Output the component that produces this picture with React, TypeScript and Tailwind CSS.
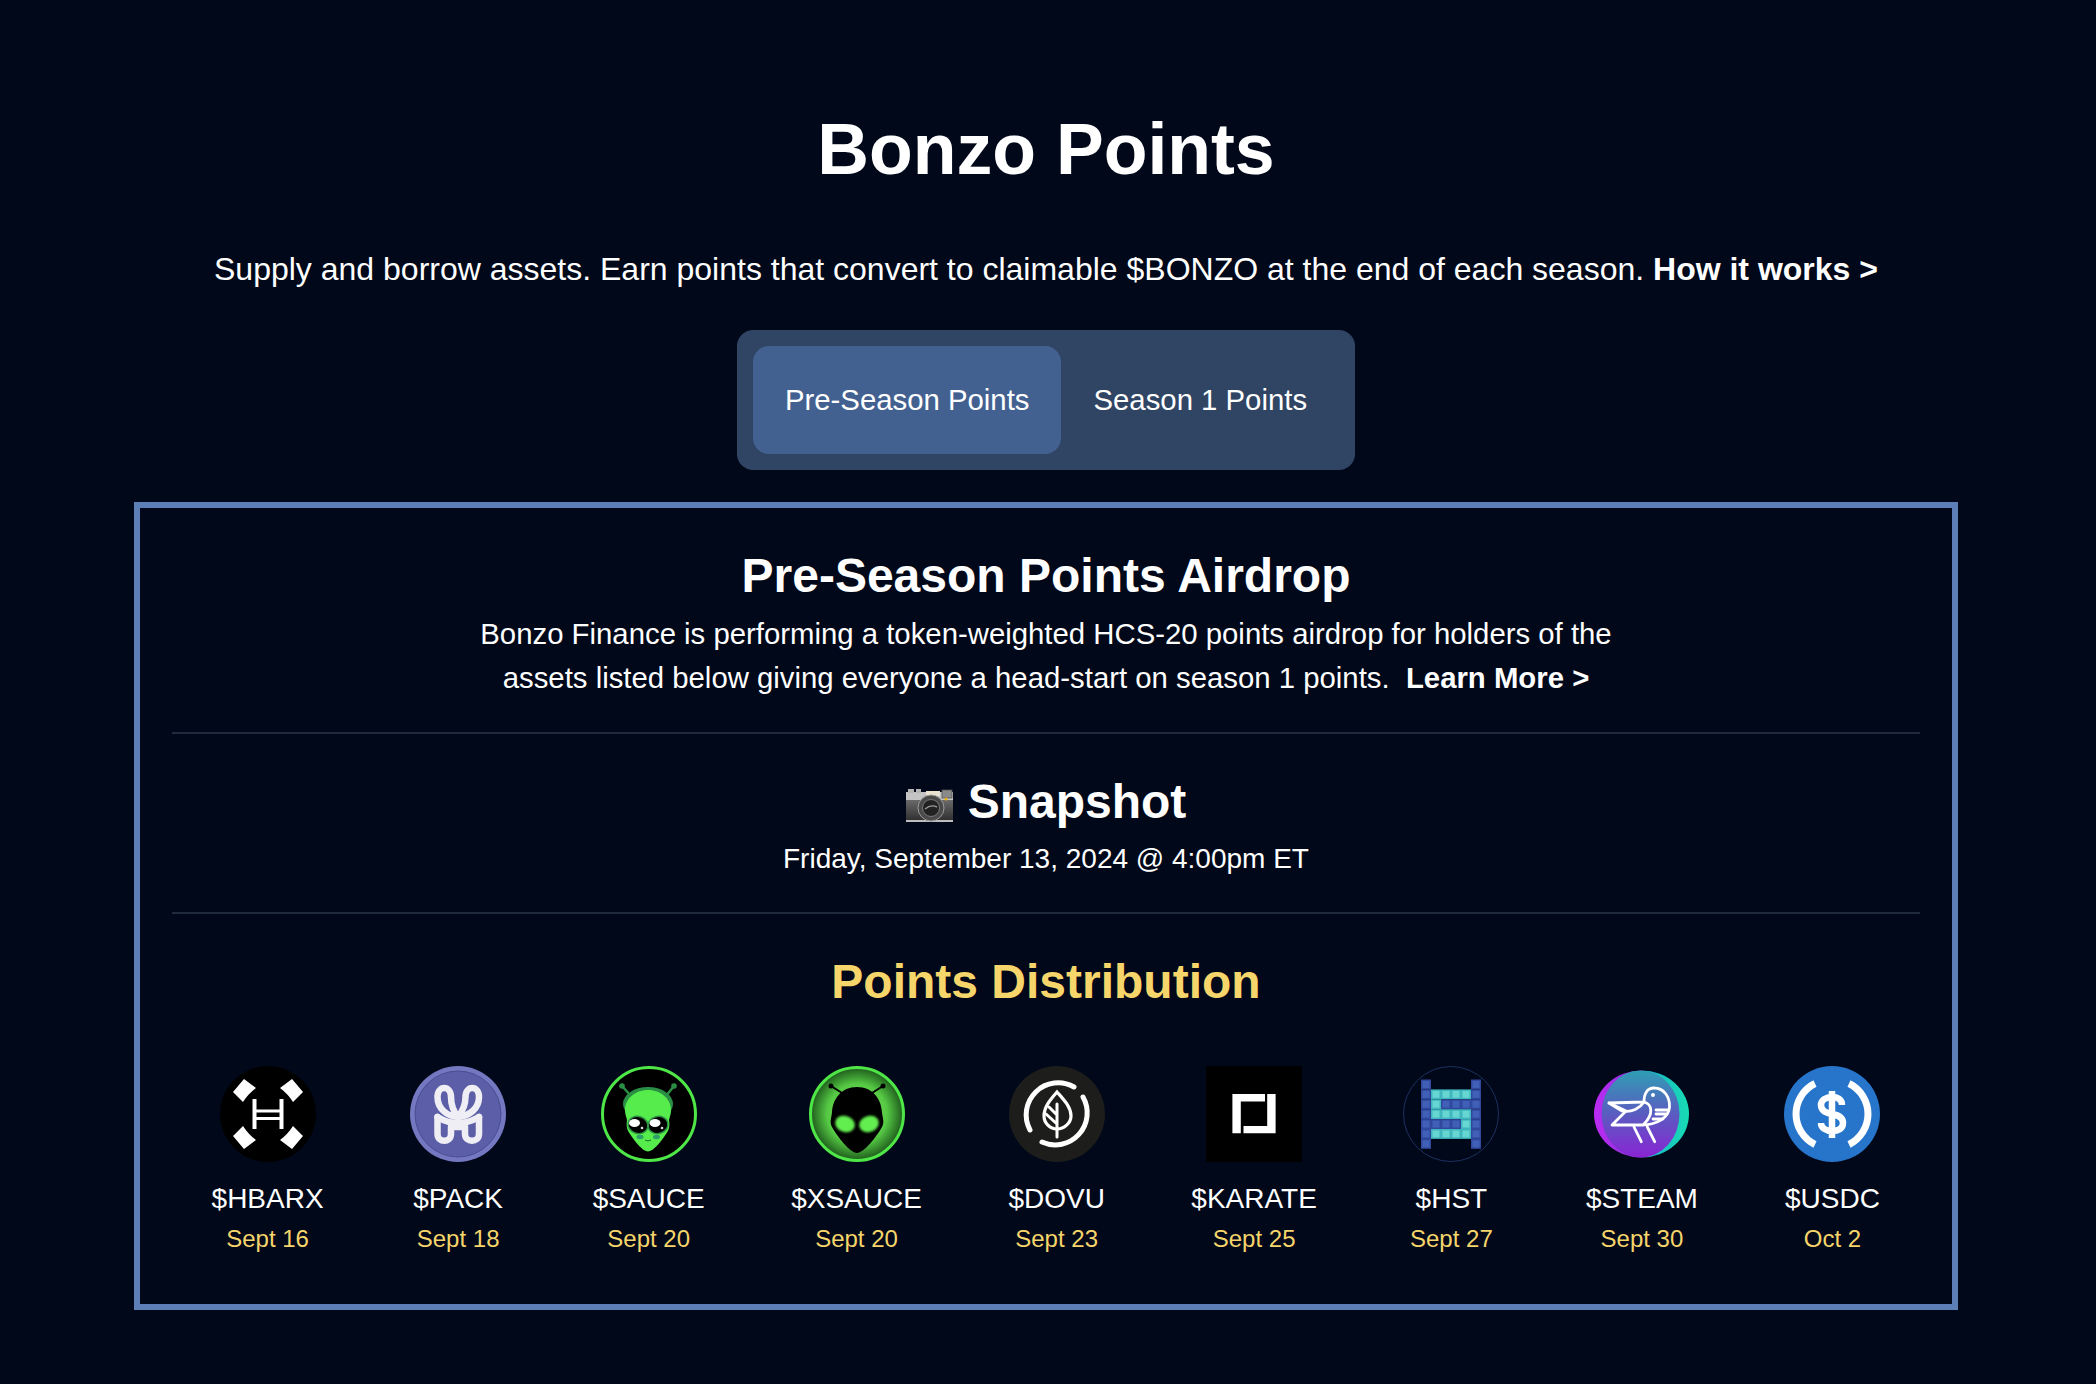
import type { ReactNode } from 'react';

function HbarxIcon() {
  return (
    <svg viewBox="0 0 96 96" className="h-24 w-24">
      <circle cx="48" cy="48" r="48" fill="#000" />
      <path d="M13 26 24 13 36 22Q28 28 23 36Z" fill="#fff" />
      <path d="M83 26 72 13 60 22Q68 28 73 36Z" fill="#fff" />
      <path d="M13 70 24 83 36 74Q28 68 23 60Z" fill="#fff" />
      <path d="M83 70 72 83 60 74Q68 68 73 60Z" fill="#fff" />
      <path d="M34.5 33v30M61.5 33v30" stroke="#fff" strokeWidth="4" fill="none" />
      <path d="M34.5 45h27M34.5 52.5h27" stroke="#fff" strokeWidth="3" fill="none" />
    </svg>
  );
}

function PackIcon() {
  return (
    <svg viewBox="0 0 96 96" className="h-24 w-24">
      <circle cx="48" cy="48" r="48" fill="#7478c0" />
      <circle cx="48" cy="48" r="43" fill="#5c5fa8" stroke="#4a4d90" strokeWidth="1" />
      <g stroke="#eeeef4" strokeWidth="6.5" fill="none" strokeLinecap="round" strokeLinejoin="round">
        <path d="M48 51C36 50 27.5 42 27.5 31 27.5 19 41 19 41 31 41 39 44 46 48 51 52 46 55.5 39 55.5 31 55.5 19 69 19 69 31 69 42 60 50 48 51" />
        <path d="M27.5 51V68C27.5 77 41 77 41 68V61H55V68C55 77 69 77 69 68V51" />
        <path d="M27.5 51C34 55 41 57 48 57 55 57 62 55 69 51" />
      </g>
    </svg>
  );
}

function SauceIcon() {
  return (
    <svg viewBox="0 0 96 96" className="h-24 w-24">
      <circle cx="48" cy="48" r="46.5" fill="#000" stroke="#4fe648" strokeWidth="3" />
      <path d="M30 30 21 20M65 30 73 20" stroke="#2a8f45" strokeWidth="2.5" />
      <circle cx="21" cy="20" r="2.8" fill="#2a8f45" />
      <circle cx="73" cy="20" r="2.8" fill="#2a8f45" />
      <ellipse cx="47" cy="38" rx="25" ry="17" fill="#2a8f45" />
      <path d="M47 24C60 24 70 33 70 44 70 48 69 50 68 54 69 60 68 64 65 68 60 76 52 85.500 47 85.500 42 85.500 34 76 29 68 26 64 25 60 26 54 25 50 24 48 24 44 24 33 34 24 47 24Z" fill="#55ec4c" />
      <ellipse cx="37" cy="59" rx="10" ry="8.500" fill="#000" stroke="#2d8f43" strokeWidth="1.5" transform="rotate(15 37 59)" />
      <ellipse cx="57" cy="59" rx="10" ry="8.500" fill="#000" stroke="#2d8f43" strokeWidth="1.5" transform="rotate(-15 57 59)" />
      <ellipse cx="33.500" cy="57" rx="5.500" ry="4" fill="#fff" />
      <ellipse cx="54" cy="57" rx="5.500" ry="4" fill="#fff" />
      <circle cx="41" cy="62" r="1.3" fill="#ddd" />
      <circle cx="61" cy="62" r="1.3" fill="#ddd" />
      <ellipse cx="39" cy="71" rx="3.500" ry="2.200" fill="#2f9e6b" />
      <ellipse cx="55.500" cy="71" rx="3.500" ry="2.200" fill="#2f9e6b" />
      <path d="M44 74Q47 76 50 74" stroke="#1c6b30" strokeWidth="1" fill="none" />
    </svg>
  );
}

function XsauceIcon() {
  return (
    <svg viewBox="0 0 96 96" className="h-24 w-24">
      <defs>
        <radialGradient id="xs-bg">
          <stop offset="0" stopColor="#8af060" />
          <stop offset="0.65" stopColor="#55c844" />
          <stop offset="1" stopColor="#1d5a1b" />
        </radialGradient>
        <filter id="xs-glow">
          <feGaussianBlur stdDeviation="1" />
        </filter>
      </defs>
      <circle cx="48" cy="48" r="46.5" fill="url(#xs-bg)" stroke="#4fe648" strokeWidth="3" />
      <path d="M33 27 22 20M63 27 74 20" stroke="#000" strokeWidth="2" />
      <circle cx="22" cy="20" r="2.5" fill="#000" />
      <circle cx="74" cy="20" r="2.5" fill="#000" />
      <path d="M48 21C64 21 72 33 73 46 73 50 76 56 73 61 68 70 55 87 48 87 41 87 28 70 23 61 20 56 23 50 23 46 24 33 32 21 48 21Z" fill="#000" />
      <ellipse cx="36" cy="58" rx="10" ry="8" fill="#63ee4f" filter="url(#xs-glow)" transform="rotate(20 36 58)" />
      <ellipse cx="60" cy="58" rx="10" ry="8" fill="#63ee4f" filter="url(#xs-glow)" transform="rotate(-20 60 58)" />
    </svg>
  );
}

function DovuIcon() {
  return (
    <svg viewBox="0 0 96 96" className="h-24 w-24">
      <circle cx="48" cy="48" r="48" fill="#1d1d1b" />
      <g stroke="#fff" fill="none" strokeLinecap="round">
        <path d="M21 64A32 32 0 0 1 65 21" strokeWidth="5" />
        <path d="M74 31A32 32 0 0 1 33 76" strokeWidth="5" />
        <path d="M48 26C41 34 35 41 35 50 35 57 41 63 48 63 55 63 62 57 62 50 62 41 55 34 48 26Z" strokeWidth="3.2" />
        <path d="M48 38V71M48 49 40 41M48 58 37 48" strokeWidth="3" />
      </g>
    </svg>
  );
}

function KarateIcon() {
  return (
    <svg viewBox="0 0 96 96" className="h-24 w-24">
      <rect width="96" height="96" fill="#000" />
      <path d="M26.4 28H59V35.6H34.8V67.3H26.4Z" fill="#fff" />
      <path d="M61.2 28H69.6V67.3H37.5V60H61.2Z" fill="#fff" />
    </svg>
  );
}

const hstRows = ['BBBBBB', 'BTTTTB', 'BTBBBB', 'BTTTTB', 'BBBBTB', 'BTTTTB', 'BBBBBB'];

function HstIcon() {
  return (
    <svg viewBox="0 0 96 96" className="h-24 w-24">
      <circle cx="48" cy="48" r="47.5" fill="none" stroke="#1d3160" strokeWidth="1" />
      {hstRows.map((row, y) =>
        row.split('').map((c, x) => {
          // top and bottom rows only have the two pillars
          if ((y === 0 || y === 6) && x > 0 && x < 5) return null;
          const left = 18 + x * 10;
          const top = 13.5 + y * 9.9;
          return (
            <g key={`${x}-${y}`}>
              <rect x={left} y={top} width="10" height="9.9" fill={c === 'T' ? '#3fb5bd' : '#30499f'} />
              <rect x={left + 1.5} y={top + 1.5} width="7" height="6.9" fill={c === 'T' ? '#67d5d2' : '#4060b8'} />
            </g>
          );
        }),
      )}
    </svg>
  );
}

function SteamIcon() {
  return (
    <svg viewBox="0 0 96 96" className="h-24 w-24">
      <defs>
        <linearGradient id="st-out" x1="0" y1="0" x2="1" y2="0">
          <stop offset="0" stopColor="#bb2cf2" />
          <stop offset="0.5" stopColor="#8a30e0" />
          <stop offset="0.55" stopColor="#1cb4c8" />
          <stop offset="1" stopColor="#17dcb4" />
        </linearGradient>
        <linearGradient id="st-in" x1="0" y1="0" x2="0" y2="1">
          <stop offset="0" stopColor="#2f9eb4" />
          <stop offset="0.5" stopColor="#5a5cc0" />
          <stop offset="1" stopColor="#8a24d4" />
        </linearGradient>
      </defs>
      <ellipse cx="47.500" cy="48" rx="47.500" ry="43.500" fill="url(#st-out)" />
      <ellipse cx="46.500" cy="48" rx="39" ry="43.500" fill="url(#st-in)" />
      <g stroke="#fff" strokeWidth="2.800" fill="none" strokeLinecap="round" strokeLinejoin="round">
        <path d="M15 37 50 36C50 28 53 22 60 22 70 22 76 31 75.500 41 75 52 62 59 48 59H18L32 45Z" />
        <path d="M15 37 28 45C38 47 46 42 50 36" />
        <path d="M50 36C58 38 60 48 50 58" />
        <path d="M62 44H74M62 48H72M59 53H69" />
        <path d="M40 61 47.300 75.700M53.300 61 60.700 75.700" />
      </g>
      <circle cx="59" cy="29" r="2" fill="#fff" />
    </svg>
  );
}

function UsdcIcon() {
  return (
    <svg viewBox="0 0 96 96" className="h-24 w-24">
      <circle cx="48" cy="48" r="48" fill="#2775ca" />
      <g stroke="#fff" fill="none" strokeWidth="7">
        <path d="M31 17.500A34 34 0 0 0 31 78.500" />
        <path d="M65 17.500A34 34 0 0 1 65 78.500" />
      </g>
      <path
        d="M58 39C58 33 53 31 48 31 42 31 37 34 37 39 37 45 42 47 48 48 54 49 59 51 59 57 59 63 54 65 48 65 42 65 37 62 37 57M48 25V72"
        stroke="#fff"
        strokeWidth="6.500"
        fill="none"
      />
    </svg>
  );
}

function CameraIcon() {
  return (
    <svg viewBox="0 0 47 33" className="mr-[15px] inline-block h-[33px] w-[47px] align-[-4px]">
      <defs>
        <linearGradient id="cam-body" x1="0" y1="0" x2="0" y2="1">
          <stop offset="0" stopColor="#6a6a6a" />
          <stop offset="1" stopColor="#2e2e2e" />
        </linearGradient>
      </defs>
      <rect x="0" y="3" width="47" height="9" fill="#c4c4c4" />
      <rect x="2" y="0" width="6" height="4" fill="#b5b5b5" />
      <rect x="10" y="0" width="5" height="4" fill="#b5b5b5" />
      <rect x="20" y="2" width="14" height="5" fill="#e9e3cf" />
      <rect x="36" y="1" width="10" height="8" fill="#8a8a8a" stroke="#555" strokeWidth="0.8" />
      <rect x="0" y="11" width="47" height="21" fill="url(#cam-body)" />
      <rect x="0" y="31" width="47" height="2" fill="#bdbdbd" />
      <circle cx="25" cy="19" r="13" fill="#4a4a4a" stroke="#9a9a9a" strokeWidth="1" />
      <circle cx="25" cy="19" r="8.500" fill="#222" stroke="#777" strokeWidth="1" />
      <path d="M19 20Q25 15 31 18" stroke="#999" strokeWidth="1.400" fill="none" />
      <circle cx="40" cy="10" r="1.500" fill="#eab308" />
    </svg>
  );
}

const tokens: { symbol: string; date: string; icon: ReactNode }[] = [
  { symbol: '$HBARX', date: 'Sept 16', icon: <HbarxIcon /> },
  { symbol: '$PACK', date: 'Sept 18', icon: <PackIcon /> },
  { symbol: '$SAUCE', date: 'Sept 20', icon: <SauceIcon /> },
  { symbol: '$XSAUCE', date: 'Sept 20', icon: <XsauceIcon /> },
  { symbol: '$DOVU', date: 'Sept 23', icon: <DovuIcon /> },
  { symbol: '$KARATE', date: 'Sept 25', icon: <KarateIcon /> },
  { symbol: '$HST', date: 'Sept 27', icon: <HstIcon /> },
  { symbol: '$STEAM', date: 'Sept 30', icon: <SteamIcon /> },
  { symbol: '$USDC', date: 'Oct 2', icon: <UsdcIcon /> },
];

export default function App() {
  return (
    <div className="min-h-[1384px] bg-[#00081a] pt-[104px] pr-1 text-center font-['Liberation_Sans',Arial,sans-serif] text-white">
      <h1 className="text-[71.6px] leading-[90px] font-bold">Bonzo Points</h1>

      <p className="mt-[57px] text-[32px] leading-[36px]">
        Supply and borrow assets. Earn points that convert to claimable $BONZO at the end of each season.{' '}
        <a className="font-bold">How it works &gt;</a>
      </p>

      <div className="mt-[43px] flex justify-center">
        <div className="flex rounded-2xl bg-[#304464] p-4 text-[29.33px]">
          <button className="h-[108px] rounded-2xl bg-[#436190] px-8">Pre-Season Points</button>
          <button className="h-[108px] rounded-2xl px-8">Season 1 Points</button>
        </div>
      </div>

      <section className="mx-[134px] mt-[32px] h-[808px] border-[6px] border-[#5b7fb6] px-[32px]">
        <h2 className="mt-[40px] text-[48px] leading-[56px] font-bold">Pre-Season Points Airdrop</h2>
        <p className="mt-[8px] text-[29.33px] leading-[44px]">
          Bonzo Finance is performing a token-weighted HCS-20 points airdrop for holders of the
          <br />
          assets listed below giving everyone a head-start on season 1 points.&nbsp; <a className="font-bold">Learn More &gt;</a>
        </p>
        <div className="mt-[32px] border-t-2 border-[#1f2a3c]" />

        <h2 className="mt-[40px] text-[48px] leading-[56px] font-bold">
          <CameraIcon />
          Snapshot
        </h2>
        <p className="mt-[11px] text-[28px] leading-[36px]">Friday, September 13, 2024 @ 4:00pm ET</p>
        <div className="mt-[35px] border-t-2 border-[#1f2a3c]" />

        <h2 className="mt-[40px] text-[48px] leading-[56px] font-bold text-[#f6d56a]">Points Distribution</h2>

        <div className="mt-[56px] flex justify-center gap-[86.5px]">
          {tokens.map((t) => (
            <div key={t.symbol} className="flex min-w-24 flex-col items-center">
              {t.icon}
              <div className="mt-[19px] text-[28px] leading-[36px]">{t.symbol}</div>
              <div className="mt-[4px] text-[24px] leading-[36px] text-[#f6d56a]">{t.date}</div>
            </div>
          ))}
        </div>
      </section>
    </div>
  );
}
